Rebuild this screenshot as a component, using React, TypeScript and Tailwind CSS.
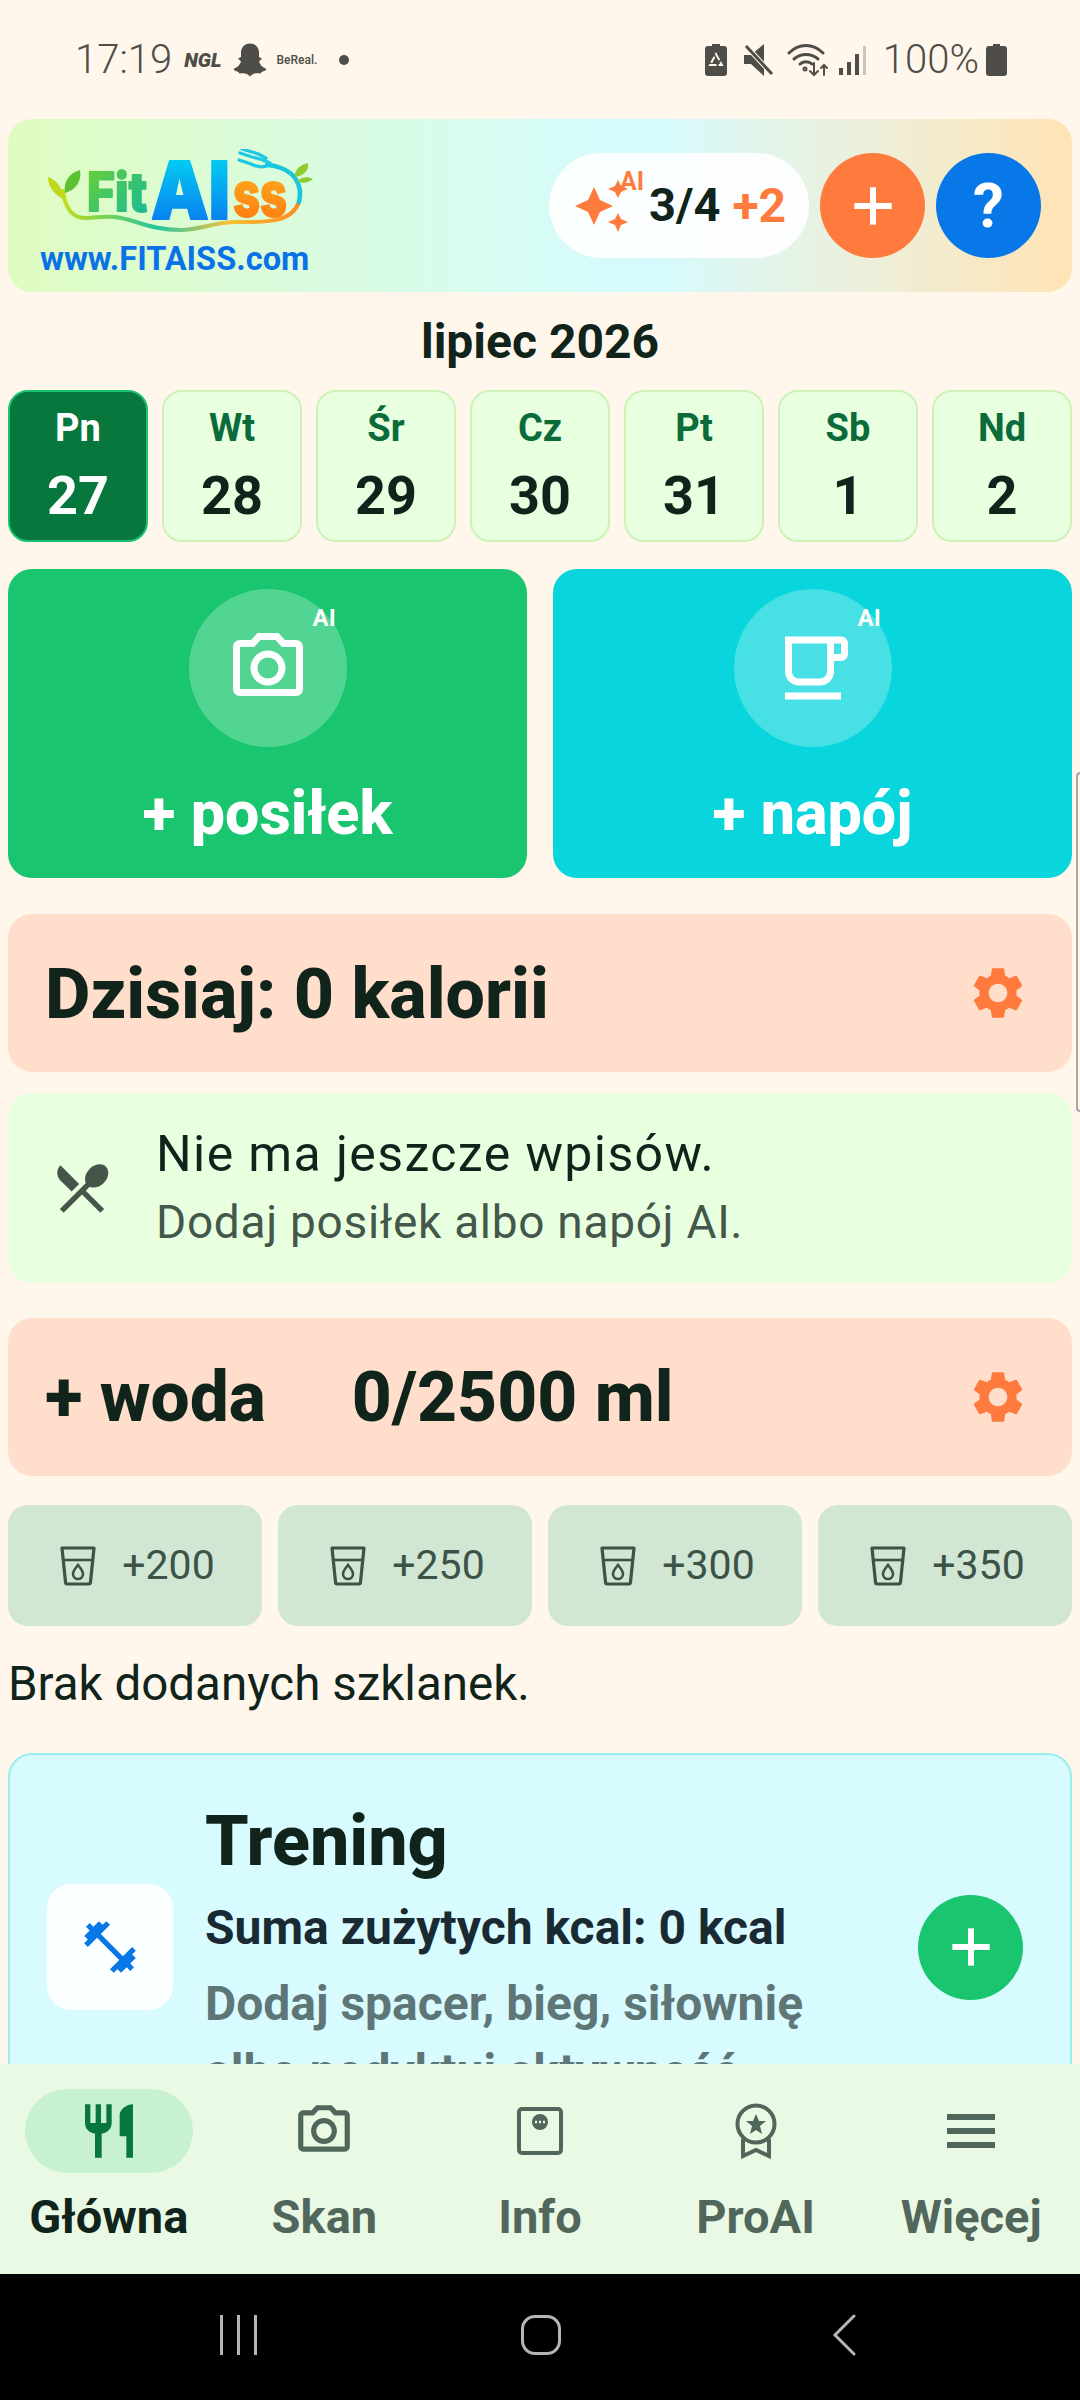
import { Plus } from "lucide-react";

const FONT = "font-['Roboto',sans-serif]";

const CAMERA =
  "M14.12 4l1.83 2H20v12H4V6h4.05l1.83-2h4.24M15 2H9L7.17 4H4c-1.1 0-2 .9-2 2v12c0 1.1.9 2 2 2h16c1.1 0 2-.9 2-2V6c0-1.1-.9-2-2-2h-3.17L15 2zm-3 7c1.65 0 3 1.35 3 3s-1.35 3-3 3-3-1.35-3-3 1.35-3 3-3m0-2c-2.76 0-5 2.24-5 5s2.24 5 5 5 5-2.24 5-5-2.24-5-5-5z";
const CUP =
  "M20 3H4v10c0 2.21 1.79 4 4 4h6c2.21 0 4-1.79 4-4v-3h2c1.11 0 2-.89 2-2V5c0-1.11-.89-2-2-2zm-4 10c0 1.1-.9 2-2 2H8c-1.1 0-2-.9-2-2V5h10v8zm4-5h-2V5h2v3zM4 19h16v2H4z";
const GEAR =
  "M19.14 12.94c.04-.3.06-.61.06-.94 0-.32-.02-.64-.07-.94l2.03-1.58c.18-.14.23-.41.12-.61l-1.92-3.32c-.12-.22-.37-.29-.59-.22l-2.39.96c-.5-.38-1.03-.7-1.62-.94l-.36-2.54c-.04-.24-.24-.41-.48-.41h-3.84c-.24 0-.43.17-.47.41l-.36 2.54c-.59.24-1.13.57-1.62.94l-2.39-.96c-.22-.08-.47 0-.59.22L2.74 8.87c-.12.21-.08.47.12.61l2.03 1.58c-.05.3-.09.63-.09.94s.02.64.07.94l-2.03 1.58c-.18.14-.23.41-.12.61l1.92 3.32c.12.22.37.29.59.22l2.39-.96c.5.38 1.03.7 1.62.94l.36 2.54c.05.24.24.41.48.41h3.84c.24 0 .44-.17.47-.41l.36-2.54c.59-.24 1.13-.56 1.62-.94l2.39.96c.22.08.47 0 .59-.22l1.92-3.32c.12-.22.07-.47-.12-.61l-2.01-1.58zM12 15.6c-1.98 0-3.6-1.62-3.6-3.6s1.62-3.6 3.6-3.6 3.6 1.62 3.6 3.6-1.62 3.6-3.6 3.6z";
const CUTLERY =
  "M8.1 13.34l2.83-2.83L3.91 3.5c-1.56 1.56-1.56 4.09 0 5.66l4.19 4.18zm6.78-1.81c1.53.71 3.68.21 5.27-1.38 1.91-1.91 2.28-4.65.81-6.12-1.46-1.46-4.2-1.1-6.12.81-1.59 1.59-2.09 3.74-1.38 5.27L3.7 19.87l1.41 1.41L12 14.41l6.88 6.88 1.41-1.41L13.41 13l1.47-1.47z";
const DUMBBELL =
  "M20.57 14.86L22 13.43 20.57 12 17 15.57 8.43 7 12 3.43 10.57 2 9.14 3.43 7.71 2 5.57 4.14 4.14 2.71 2.71 4.14l1.43 1.43L2 7.71l1.43 1.43L2 10.57 3.43 12 7 8.43 15.57 17 12 20.57 13.43 22l1.43-1.43L16.29 22l2.14-2.14 1.43 1.43 1.43-1.43-1.43-1.43L22 16.29z";
const RESTAURANT =
  "M11 9H9V2H7v7H5V2H3v7c0 2.12 1.66 3.84 3.75 3.97V22h2.5v-9.03C11.34 12.84 13 11.12 13 9V2h-2v7zm5-3v8h2.5v8H21V2c-2.76 0-5 2.24-5 4z";

function Mi({ d, size, color, className }: { d: string; size: number; color: string; className?: string }) {
  return (
    <svg width={size} height={size} viewBox="0 0 24 24" fill={color} className={className}>
      <path d={d} />
    </svg>
  );
}

function Sparkles() {
  return (
    <svg width="54" height="52" viewBox="0 0 54 52" fill="#ff7a3d">
      <path d="M19 7l6 13 13 6-13 6-6 13-6-13-13-6 13-6z" />
      <path d="M43 0l3 6 7 3-7 3-3 6-3-6-7-3 7-3z" />
      <path d="M43 33l3 6 7 3-7 3-3 7-3-7-7-3 7-3z" />
    </svg>
  );
}

function Logo() {
  return (
    <svg width="266" height="85" viewBox="0 0 266 85" className="ml-[8px]">
      <defs>
        <linearGradient id="fit" x1="0" y1="0" x2="1" y2="1">
          <stop offset="0" stopColor="#6fd12f" />
          <stop offset="1" stopColor="#0fb8a2" />
        </linearGradient>
        <linearGradient id="ai" x1="0" y1="0" x2="0" y2="1">
          <stop offset="0" stopColor="#00e2f2" />
          <stop offset="1" stopColor="#0a6cf0" />
        </linearGradient>
        <linearGradient id="ss" x1="0" y1="0" x2="0" y2="1">
          <stop offset="0" stopColor="#ffb81f" />
          <stop offset="1" stopColor="#ff7410" />
        </linearGradient>
        <linearGradient id="swoosh" gradientUnits="userSpaceOnUse" x1="15" y1="0" x2="250" y2="0">
          <stop offset="0" stopColor="#c3dc1a" />
          <stop offset="0.4" stopColor="#22c6a0" />
          <stop offset="0.7" stopColor="#f5c23a" />
          <stop offset="1" stopColor="#ff8a20" />
        </linearGradient>
      </defs>
      <path d="M15 42c2 16 9 27 22 27 12 0 22-3 36 0 16 3 32 12 60 12 20 0 32-8 56-8 26 0 54 2 62-20" fill="none" stroke="url(#swoosh)" strokeWidth="4" strokeLinecap="round" />
      <path d="M251 53c4-16-4-29-18-34-5-2-10-3-14-3" fill="none" stroke="#16c6dc" strokeWidth="4.5" strokeLinecap="round" />
      <path d="M221 16c-6 3-12 2-18-1l-12-4M222 14c-6-3-12-5-18-6l-12-4M218 9c-5-3-9-5-14-6L194 0" fill="none" stroke="#1cc8e4" strokeWidth="3.2" strokeLinecap="round" />
      <path d="M15 50C4 44 0 36 0 28c9 3 15 11 15 22z" fill="#c0d81c" />
      <path d="M17 44c-2-11 4-20 15-23 2 11-4 20-15 23z" fill="#5cc233" />
      <path d="M247 28c-1-6 4-12 13-14 1 8-5 13-13 14z" fill="#8ccc2c" />
      <path d="M249 32c5-4 10-5 16-2-5 4-10 5-16 2z" fill="#8ccc2c" />
      <text x="39" y="62" fontFamily="Inter, sans-serif" fontWeight="800" fontSize="54" textLength="60" lengthAdjust="spacingAndGlyphs" fill="url(#fit)" stroke="url(#fit)" strokeWidth="2" strokeLinejoin="round">Fit</text>
      <text x="103" y="70" fontFamily="Inter, sans-serif" fontWeight="900" fontSize="80" textLength="79" lengthAdjust="spacingAndGlyphs" fill="url(#ai)" stroke="url(#ai)" strokeWidth="2" strokeLinejoin="round">AI</text>
      <text x="185" y="67" fontFamily="Inter, sans-serif" fontWeight="800" fontSize="62" textLength="54" lengthAdjust="spacingAndGlyphs" fill="url(#ss)" stroke="url(#ss)" strokeWidth="2" strokeLinejoin="round">ss</text>
    </svg>
  );
}

function Day({ name, num, active }: { name: string; num: string; active?: boolean }) {
  return (
    <div
      className={
        active
          ? "flex h-[152px] flex-col items-center rounded-[20px] border-2 border-[#1ac46e] bg-[#08773d] pt-[13px]"
          : "flex h-[152px] flex-col items-center rounded-[20px] border-2 border-[#cdf2b8] bg-[#e8ffe0] pt-[13px]"
      }
    >
      <span className={active ? "text-[38px] leading-[46px] font-bold text-white" : "text-[38px] leading-[46px] font-bold text-[#0b6b3a]"}>
        {name}
      </span>
      <span className={active ? "mt-[15px] text-[54px] leading-[60px] font-bold text-white" : "mt-[15px] text-[54px] leading-[60px] font-bold text-[#10241b]"}>
        {num}
      </span>
    </div>
  );
}

function GlassIcon() {
  return (
    <svg width="36" height="40" viewBox="0 0 36 40" fill="none" stroke="#3c5347" strokeWidth="3.2">
      <path d="M2 2h32l-3.5 34a2 2 0 0 1-2 2H7.5a2 2 0 0 1-2-2z" strokeLinejoin="round" />
      <path d="M3 14h30" strokeWidth="2.6" />
      <path d="M18 19c3 4 5 6 5 9a5 5 0 0 1-10 0c0-3 2-5 5-9z" strokeWidth="2.6" />
    </svg>
  );
}

function Glass({ label }: { label: string }) {
  return (
    <div className="flex h-[121px] items-center justify-center gap-[26px] rounded-[20px] bg-[#d2e6d4] pl-[5px]">
      <GlassIcon />
      <span className="text-[41px] text-[#3c5347]">{label}</span>
    </div>
  );
}

function NavItem({ label, active, children }: { label: string; active?: boolean; children: React.ReactNode }) {
  return (
    <div className="flex flex-1 flex-col items-center">
      <div className={active ? "flex h-[84px] w-[168px] items-center justify-center rounded-full bg-[#c8f1d0]" : "flex h-[84px] w-[168px] items-center justify-center"}>
        {children}
      </div>
      <span className={active ? "mt-[17px] text-[47px] leading-[54px] font-bold text-[#10241b]" : "mt-[17px] text-[47px] leading-[54px] font-bold text-[#51675b]"}>
        {label}
      </span>
    </div>
  );
}

export default function App() {
  return (
    <div className={`relative flex h-[2400px] w-[1080px] flex-col overflow-hidden bg-[#fff7eb] ${FONT}`}>
      {/* status bar */}
      <div className="flex h-[119px] shrink-0 items-center justify-between pr-[73px] pl-[75px] text-[#4f4d47]">
        <div className="flex items-center">
          <span className="text-[40px] font-light">17:19</span>
          <span className="ml-[12px] text-[20px] font-black italic">NGL</span>
          <svg width="36" height="36" viewBox="0 0 24 24" className="ml-[10px]" fill="currentColor">
            <path d="M12 1c4 0 6 3 6 6v3l2 1-2 2c1 3 3 4 5 5-1 2-3 1-4 3-2 0-4-1-7 2-3-3-5-2-7-2-1-2-3-1-4-3 2-1 4-2 5-5l-2-2 2-1V7c0-3 2-6 6-6z" />
          </svg>
          <span className="ml-[9px] text-[12px] font-medium">BeReal.</span>
          <span className="ml-[22px] h-[10px] w-[10px] rounded-full bg-[#4f4d47]" />
        </div>
        <div className="flex items-center">
          <svg width="22" height="32" viewBox="0 0 22 32" fill="currentColor">
            <path d="M7 0h8v2h4a3 3 0 0 1 3 3v24a3 3 0 0 1-3 3H3a3 3 0 0 1-3-3V5a3 3 0 0 1 3-3h4z" />
            <path d="M11 10l6 11H5z" fill="none" stroke="#fff7eb" strokeWidth="2" strokeDasharray="7 2" />
          </svg>
          <svg width="30" height="32" viewBox="0 0 30 32" className="ml-[17px]" fill="currentColor">
            <path d="M0 11h7L20 0v32L7 20H0z" />
            <path d="M2 2l26 28" stroke="#fff7eb" strokeWidth="5" />
            <path d="M2 2l26 28" stroke="currentColor" strokeWidth="3" />
          </svg>
          <svg width="42" height="34" viewBox="0 0 42 34" className="ml-[13px]" fill="none" stroke="currentColor" strokeWidth="3" strokeLinecap="round">
            <path d="M2 10c10-10 24-10 34 0" />
            <path d="M7 16c7-6 17-6 24 0" />
            <path d="M13 21c3-3 9-3 12 0" />
            <path d="M27 20v12M23 28l4 4 4-4M37 32V22M34 25l3-3 3 3" strokeWidth="2" />
            <circle cx="18" cy="26" r="1" />
          </svg>
          <div className="ml-[10px] flex h-[30px] items-end gap-[4px]">
            <span className="h-[7px] w-[4px] bg-[#4f4d47]" />
            <span className="h-[13px] w-[4px] bg-[#4f4d47]" />
            <span className="h-[21px] w-[4px] bg-[#4f4d47]" />
            <span className="h-[29px] w-[3px] bg-[#c9c6bd]" />
          </div>
          <span className="ml-[17px] text-[40px] font-light">100%</span>
          <svg width="21" height="32" viewBox="0 0 21 32" className="ml-[7px]" fill="currentColor">
            <path d="M7 0h7v2h4a3 3 0 0 1 3 3v24a3 3 0 0 1-3 3H3a3 3 0 0 1-3-3V5a3 3 0 0 1 3-3h4z" />
          </svg>
        </div>
      </div>

      {/* scrolling content */}
      <div className="min-h-0 flex-1 overflow-hidden px-[8px]">
        <div className="flex h-[173px] items-center justify-between rounded-[24px] bg-gradient-to-r from-[#dffcc0] via-[#d5fbff] via-60% to-[#ffe3b5] pr-[31px] pl-[32px]">
          <div className="mt-[13px] flex flex-col items-start">
            <Logo />
            <span className="mt-[8px] text-[32.6px] leading-[34px] font-bold whitespace-nowrap text-[#0a72e6]">www.FITAISS.com</span>
          </div>
          <div className="flex items-center gap-[11px]">
            <div className="flex h-[105px] w-[260px] items-center rounded-full bg-white/90 pl-[26px]">
              <div className="relative">
                <Sparkles />
                <span className="absolute -top-[17px] left-[45px] text-[25px] font-bold text-[#ff7a3d]">AI</span>
              </div>
              <span className="ml-[20px] text-[47px] font-bold text-[#10241b]">3/4</span>
              <span className="ml-[12px] text-[48px] font-bold text-[#ff7a3d]">+2</span>
            </div>
            <div className="flex h-[105px] w-[105px] items-center justify-center rounded-full bg-[#ff7a3d]">
              <Plus size={64} color="#fff" strokeWidth={2.25} strokeLinecap="butt" />
            </div>
            <div className="flex h-[105px] w-[105px] items-center justify-center rounded-full bg-[#0877e8] text-[62px] font-bold text-white">?</div>
          </div>
        </div>

        <div className="mt-[25px] text-center text-[48px] leading-[50px] font-bold text-[#10241b]">lipiec 2026</div>

        <div className="mt-[23px] grid grid-cols-7 gap-[14px]">
          <Day name="Pn" num="27" active />
          <Day name="Wt" num="28" />
          <Day name="Śr" num="29" />
          <Day name="Cz" num="30" />
          <Day name="Pt" num="31" />
          <Day name="Sb" num="1" />
          <Day name="Nd" num="2" />
        </div>

        <div className="mt-[27px] grid grid-cols-2 gap-[26px]">
          <div className="flex h-[309px] flex-col items-center rounded-[24px] bg-[#19c66f] pt-[20px]">
            <div className="relative flex h-[158px] w-[158px] items-center justify-center rounded-full bg-white/25">
              <Mi d={CAMERA} size={84} color="#fff" />
              <span className="absolute top-[11px] left-[124px] text-[24px] font-bold text-white">AI</span>
            </div>
            <span className="mt-[30px] text-[61px] leading-[72px] font-extrabold text-white">+ posiłek</span>
          </div>
          <div className="flex h-[309px] flex-col items-center rounded-[24px] bg-[#09d6dc] pt-[20px]">
            <div className="relative flex h-[158px] w-[158px] items-center justify-center rounded-full bg-white/25">
              <Mi d={CUP} size={84} color="#fff" />
              <span className="absolute top-[11px] left-[124px] text-[24px] font-bold text-white">AI</span>
            </div>
            <span className="mt-[30px] text-[61px] leading-[72px] font-extrabold text-white">+ napój</span>
          </div>
        </div>

        <div className="mt-[36px] flex h-[158px] items-center justify-between rounded-[24px] bg-[#ffdfcc] pr-[43px] pl-[37px]">
          <span className="pt-[2px] text-[70px] font-extrabold text-[#10241b]">Dzisiaj: 0 kalorii</span>
          <Mi d={GEAR} size={62} color="#ff7a3d" />
        </div>

        <div className="mt-[21px] flex h-[190px] items-center rounded-[24px] bg-[#e8ffe0] pl-[42px]">
          <Mi d={CUTLERY} size={64} color="#45554a" />
          <div className="ml-[42px] flex flex-col">
            <span className="text-[50px] leading-[68px] tracking-[1.4px] text-[#10241b]">Nie ma jeszcze wpisów.</span>
            <span className="text-[46px] leading-[68px] tracking-[0.7px] text-[#44574b]">Dodaj posiłek albo napój AI.</span>
          </div>
        </div>

        <div className="mt-[35px] flex h-[158px] items-center rounded-[24px] bg-[#ffdfcc] pr-[43px] pl-[37px]">
          <span className="pt-[3px] text-[69.5px] font-extrabold text-[#10241b]">+ woda</span>
          <span className="ml-[86px] pt-[3px] text-[69.5px] font-extrabold text-[#10241b]">0/2500 ml</span>
          <Mi d={GEAR} size={62} color="#ff7a3d" className="ml-auto" />
        </div>

        <div className="mt-[29px] grid grid-cols-4 gap-[16px]">
          <Glass label="+200" />
          <Glass label="+250" />
          <Glass label="+300" />
          <Glass label="+350" />
        </div>

        <p className="mt-[32px] text-[47.5px] leading-[52px] text-[#10241b]">Brak dodanych szklanek.</p>

        <div className="mt-[43px] flex h-[388px] items-center rounded-[24px] border-2 border-[#9becec] bg-[#d7fbff] pr-[47px] pl-[37px]">
          <div className="flex h-[126px] w-[126px] shrink-0 items-center justify-center rounded-[24px] bg-white/90">
            <Mi d={DUMBBELL} size={62} color="#0877e8" />
          </div>
          <div className="ml-[32px] flex w-[660px] shrink-0 flex-col self-start pt-[46px]">
            <span className="text-[70px] leading-[80px] font-extrabold text-[#10241b]">Trening</span>
            <span className="mt-[19px] text-[48px] leading-[56px] font-bold text-[#1a2a33]">Suma zużytych kcal: 0 kcal</span>
            <span className="mt-[14px] text-[48px] leading-[68px] font-bold text-[#5f7677]">Dodaj spacer, bieg, siłownię albo podyktuj aktywność</span>
          </div>
          <div className="ml-auto flex h-[105px] w-[105px] shrink-0 items-center justify-center rounded-full bg-[#19c66f]">
            <Plus size={64} color="#fff" strokeWidth={2.25} strokeLinecap="butt" />
          </div>
        </div>
      </div>

      {/* bottom nav */}
      <div className="flex h-[210px] shrink-0 bg-[#e9f9e4] px-[1px] pt-[25px]">
        <NavItem label="Główna" active>
          <Mi d={RESTAURANT} size={64} color="#08773d" />
        </NavItem>
        <NavItem label="Skan">
          <Mi d={CAMERA} size={62} color="#51675b" />
        </NavItem>
        <NavItem label="Info">
          <svg width="46" height="48" viewBox="0 0 46 48" fill="none" stroke="#51675b" strokeWidth="4">
            <rect x="2" y="2" width="42" height="44" rx="3" />
            <circle cx="23" cy="15" r="8" fill="#51675b" stroke="none" />
            <path d="M18 15h10" stroke="#e9f9e4" strokeWidth="2.5" strokeDasharray="2 2" />
          </svg>
        </NavItem>
        <NavItem label="ProAI">
          <svg width="42" height="56" viewBox="0 0 42 56" fill="none" stroke="#51675b" strokeWidth="4">
            <circle cx="21" cy="21" r="18.5" />
            <path d="M21 11l3 7h7l-6 5 2 8-6-4-6 4 2-8-6-5h7z" fill="#51675b" stroke="none" />
            <path d="M8 36v17l13-6 13 6V36" />
          </svg>
        </NavItem>
        <NavItem label="Więcej">
          <div className="flex w-[48px] flex-col gap-[8px]">
            <span className="h-[6px] bg-[#51675b]" />
            <span className="h-[6px] bg-[#51675b]" />
            <span className="h-[6px] bg-[#51675b]" />
          </div>
        </NavItem>
      </div>

      {/* android nav */}
      <div className="flex h-[126px] shrink-0 items-center bg-black pb-[4px]">
        <div className="ml-[220px] flex gap-[14px]">
          <span className="h-[40px] w-[3px] bg-[#b5b5b5]" />
          <span className="h-[40px] w-[3px] bg-[#b5b5b5]" />
          <span className="h-[40px] w-[3px] bg-[#b5b5b5]" />
        </div>
        <div className="ml-[264px] h-[40px] w-[40px] rounded-[14px] border-[3px] border-[#b5b5b5]" />
        <svg width="24" height="42" viewBox="0 0 24 42" fill="none" stroke="#b5b5b5" strokeWidth="3" strokeLinecap="round" className="ml-[271px]">
          <path d="M22 2L3 21l19 19" />
        </svg>
      </div>

      {/* edge panel handle */}
      <div className="absolute top-[772px] right-0 h-[340px] w-[4px] rounded-l-[6px] border-y-2 border-l-2 border-[#a9a9a9]" />
    </div>
  );
}
